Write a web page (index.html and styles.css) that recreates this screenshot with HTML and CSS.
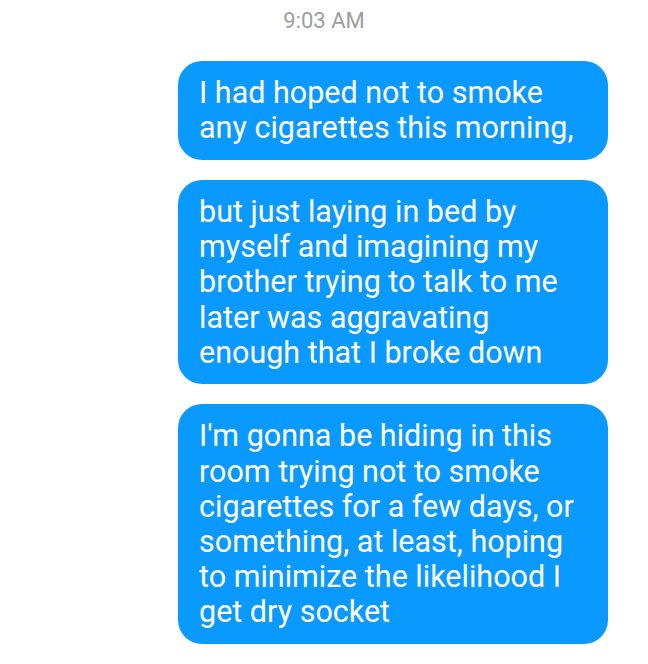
FILE: index.html
```html
<!DOCTYPE html>
<html>
<head>
<meta charset="utf-8">
<link rel="stylesheet" href="styles.css">
</head>
<body>
<div class="thread">
  <div class="time">9:03 AM</div>
  <div class="msg">I had hoped not to smoke<br>any cigarettes this morning,</div>
  <div class="msg">but just laying in bed by<br>myself and imagining my<br>brother trying to talk to me<br>later was aggravating<br>enough that I broke down</div>
  <div class="msg">I'm gonna be hiding in this<br>room trying not to smoke<br>cigarettes for a few days, or<br>something, at least, hoping<br>to minimize the likelihood I<br>get dry socket</div>
</div>
</body>
</html>
```
FILE: styles.css
```css
html, body {
  margin: 0;
  padding: 0;
  background: #ffffff;
}
.thread {
  display: flex;
  flex-direction: column;
  align-items: flex-end;
  gap: 20px;
  padding: 7px 40px 0 0;
  font-family: Roboto, "Noto Sans", sans-serif;
}
.time {
  align-self: stretch;
  margin-right: -40px;
  text-align: center;
  font-size: 22px;
  line-height: 28px;
  color: #9e9e9e;
  margin-bottom: 6px;
}
.msg {
  box-sizing: border-box;
  width: 430px;
  background: #0a99ff;
  color: #ffffff;
  border-radius: 24px;
  padding: 14px 21px 14.5px 21px;
  font-size: 30.5px;
  line-height: 35.2px;
  white-space: nowrap;
}
```
